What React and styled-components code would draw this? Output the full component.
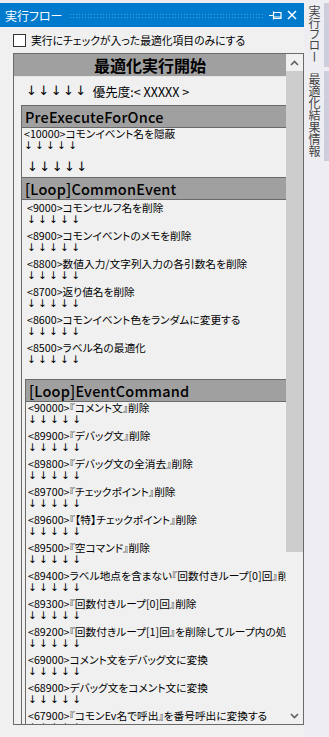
import styled, { createGlobalStyle } from "styled-components";

const GlobalStyle = createGlobalStyle`
  html, body {
    margin: 0;
    padding: 0;
    background: #eeeef2;
  }
  body {
    font-family: "Noto Sans CJK JP", "Noto Sans", sans-serif;
    color: #000;
  }
`;

const stages = {
  pre: ["<10000>コモンイベント名を隠蔽"],
  common: [
    "<9000>コモンセルフ名を削除",
    "<8900>コモンイベントのメモを削除",
    "<8800>数値入力/文字列入力の各引数名を削除",
    "<8700>返り値名を削除",
    "<8600>コモンイベント色をランダムに変更する",
    "<8500>ラベル名の最適化",
  ],
  command: [
    "<90000>『コメント文』削除",
    "<89900>『デバッグ文』削除",
    "<89800>『デバッグ文の全消去』削除",
    "<89700>『チェックポイント』削除",
    "<89600>『【特】チェックポイント』削除",
    "<89500>『空コマンド』削除",
    "<89400>ラベル地点を含まない『回数付きループ[0]回』削除",
    "<89300>『回数付きループ[0]回』削除",
    "<89200>『回数付きループ[1]回』を削除してループ内の処理を展開",
    "<69000>コメント文をデバッグ文に変換",
    "<68900>デバッグ文をコメント文に変換",
    "<67900>『コモンEv名で呼出』を番号呼出に変換する",
  ],
};

function Step({ text, pad }) {
  return (
    <StepWrap pad={pad}>
      <StepText>{text}</StepText>
      <Arrows>↓ ↓ ↓ ↓ ↓</Arrows>
    </StepWrap>
  );
}

function Scrollbar() {
  return (
    <Bar>
      <BarButton>
        <svg width="9" height="6" viewBox="0 0 9 6">
          <path d="M1 5 L4.5 1.5 L8 5" fill="none" stroke="#606060" strokeWidth="1.6" />
        </svg>
      </BarButton>
      <Thumb size={481} />
      <Track />
      <BarButton>
        <svg width="9" height="6" viewBox="0 0 9 6">
          <path d="M1 1 L4.5 4.5 L8 1" fill="none" stroke="#606060" strokeWidth="1.6" />
        </svg>
      </BarButton>
    </Bar>
  );
}

export default function App() {
  return (
    <Root>
      <GlobalStyle />
      <Panel>
        <TitleBar>
          <Title>実行フロー</Title>
          <Grip />
          <TitleButton>
            <svg width="13" height="9" viewBox="0 0 13 9">
              <path d="M0 4.5 H4.5 M4.5 0.5 V8.5 M4.5 1.5 H12 V7.5 H4.5 M4.5 6 H12" fill="none" stroke="#fff" strokeWidth="1.2" />
            </svg>
          </TitleButton>
          <TitleButton>
            <svg width="10" height="10" viewBox="0 0 10 10">
              <path d="M1 1 L9 9 M9 1 L1 9" stroke="#fff" strokeWidth="1.5" />
            </svg>
          </TitleButton>
        </TitleBar>

        <CheckRow>
          <CheckBox />
          <CheckLabel>実行にチェックが入った最適化項目のみにする</CheckLabel>
        </CheckRow>

        <FlowBox>
          <FlowContent>
            <MainHeader>最適化実行開始</MainHeader>
            <PriorityRow>
              <Arrows big>↓ ↓ ↓ ↓ ↓</Arrows>
              <Priority>優先度:&lt; XXXXX &gt;</Priority>
            </PriorityRow>

            <StageBox indent={7}>
              <StageHeader>PreExecuteForOnce</StageHeader>
              {stages.pre.map((t) => (
                <Step key={t} text={t} pad={2} />
              ))}
              <StageArrows>
                <Arrows big>↓ ↓ ↓ ↓ ↓</Arrows>
              </StageArrows>
            </StageBox>

            <StageBox indent={7}>
              <StageHeader>[Loop]CommonEvent</StageHeader>
              <StepList>
                {stages.common.map((t) => (
                  <Step key={t} text={t} pad={5} />
                ))}
              </StepList>

              <StageBox indent={3} nested>
                <StageHeader>[Loop]EventCommand</StageHeader>
                {stages.command.map((t) => (
                  <Step key={t} text={t} pad={2} />
                ))}
              </StageBox>
            </StageBox>
          </FlowContent>
          <Scrollbar />
        </FlowBox>
      </Panel>

      <SideStrip>
        <SideTab>実行フロー</SideTab>
        <SideTab>最適化結果情報</SideTab>
      </SideStrip>
    </Root>
  );
}

const Root = styled.div`
  display: flex;
  width: 329px;
  height: 737px;
  padding-top: 3px;
  box-sizing: border-box;
  background: #eeeef2;
  overflow: hidden;
`;

const Panel = styled.div`
  width: 304px;
  display: flex;
  flex-direction: column;
  background: #f0f0f0;
`;

const TitleBar = styled.div`
  height: 24px;
  flex: none;
  display: flex;
  align-items: center;
  background: #007acc;
  padding: 0 5px;
`;

const Title = styled.span`
  color: #fff;
  font-size: 12px;
  font-feature-settings: "palt";
  white-space: nowrap;
`;

const Grip = styled.div`
  flex: 1;
  height: 5px;
  margin: 1px 4px 0 6px;
  background-image: radial-gradient(circle, #5aa5de 0.7px, transparent 0.9px);
  background-size: 3px 3px;
  opacity: 0.9;
`;

const TitleButton = styled.div`
  width: 15px;
  height: 15px;
  display: flex;
  align-items: center;
  justify-content: center;
  margin-left: 1px;
`;

const CheckRow = styled.div`
  height: 26px;
  flex: none;
  display: flex;
  align-items: center;
  padding-left: 13px;
  gap: 5px;
`;

const CheckBox = styled.span`
  width: 13px;
  height: 13px;
  box-sizing: border-box;
  border: 1px solid #333;
  background: #fff;
`;

const CheckLabel = styled.span`
  font-size: 10.8px;
  font-feature-settings: "palt";
  color: #000;
  white-space: nowrap;
`;

const FlowBox = styled.div`
  flex: 1;
  min-height: 0;
  display: flex;
  margin: 0 0 12px 13px;
  border: 1px solid #6a6a6a;
  background: #f0f0f0;
`;

const FlowContent = styled.div`
  flex: 1;
  min-width: 0;
  overflow: hidden;
`;

const MainHeader = styled.div`
  height: 22px;
  line-height: 22px;
  background: #a0a0a0;
  text-align: center;
  font-size: 16px;
  font-weight: 700;
  border-bottom: 1px solid #e6e6e6;
`;

const PriorityRow = styled.div`
  height: 28px;
  display: flex;
  align-items: center;
  padding-left: 12px;
  gap: 8px;
`;

const Priority = styled.span`
  font-size: 12.5px;
  font-feature-settings: "palt";
  white-space: nowrap;
`;

const Arrows = styled.div`
  font-family: "DejaVu Sans", sans-serif;
  font-size: ${(p) => (p.big ? "13px" : "10.5px")};
  letter-spacing: ${(p) => (p.big ? "-1.35px" : "-0.55px")};
  line-height: ${(p) => (p.big ? "18px" : "10px")};
  height: ${(p) => (p.big ? "18px" : "10px")};
  white-space: nowrap;
`;

const StageBox = styled.div`
  margin-left: ${(p) => p.indent}px;
  margin-top: ${(p) => (p.nested ? "9px" : "0")};
  border-left: 1px solid #6a6a6a;
  border-top: 1px solid #6a6a6a;
`;

const StageHeader = styled.div`
  height: 21px;
  line-height: 21px;
  background: #a0a0a0;
  padding-left: 3px;
  font-size: 14.5px;
  font-weight: 500;
  letter-spacing: 0.2px;
  white-space: nowrap;
  border-bottom: 1px solid #6a6a6a;
`;

const StepList = styled.div`
  padding-top: 2px;
`;

const StepWrap = styled.div`
  height: 28px;
  padding-left: ${(p) => p.pad}px;
  box-sizing: border-box;
  display: flex;
  flex-direction: column;
`;

const StepText = styled.div`
  font-size: 10.7px;
  line-height: 12px;
  height: 12px;
  font-feature-settings: "palt";
  white-space: nowrap;
`;

const StageArrows = styled.div`
  padding: 2px 0 1px 5px;
`;

const Bar = styled.div`
  width: 17px;
  flex: none;
  display: flex;
  flex-direction: column;
  background: #f0f0f0;
`;

const BarButton = styled.div`
  height: 17px;
  flex: none;
  display: flex;
  align-items: center;
  justify-content: center;
`;

const Thumb = styled.div`
  height: ${(p) => p.size}px;
  flex: none;
  background: #cdcdcd;
`;

const Track = styled.div`
  flex: 1;
`;

const SideStrip = styled.div`
  width: 25px;
  display: flex;
  flex-direction: column;
  gap: 4px;
  padding-left: 1px;
  box-sizing: border-box;
`;

const SideTab = styled.div`
  writing-mode: vertical-rl;
  text-orientation: upright;
  font-size: 12px;
  font-feature-settings: "vpal";
  color: #444;
  padding: 2px 0 4px;
  border-right: 5px solid #cccedb;
  width: 19px;
  display: flex;
  align-items: center;
`;
